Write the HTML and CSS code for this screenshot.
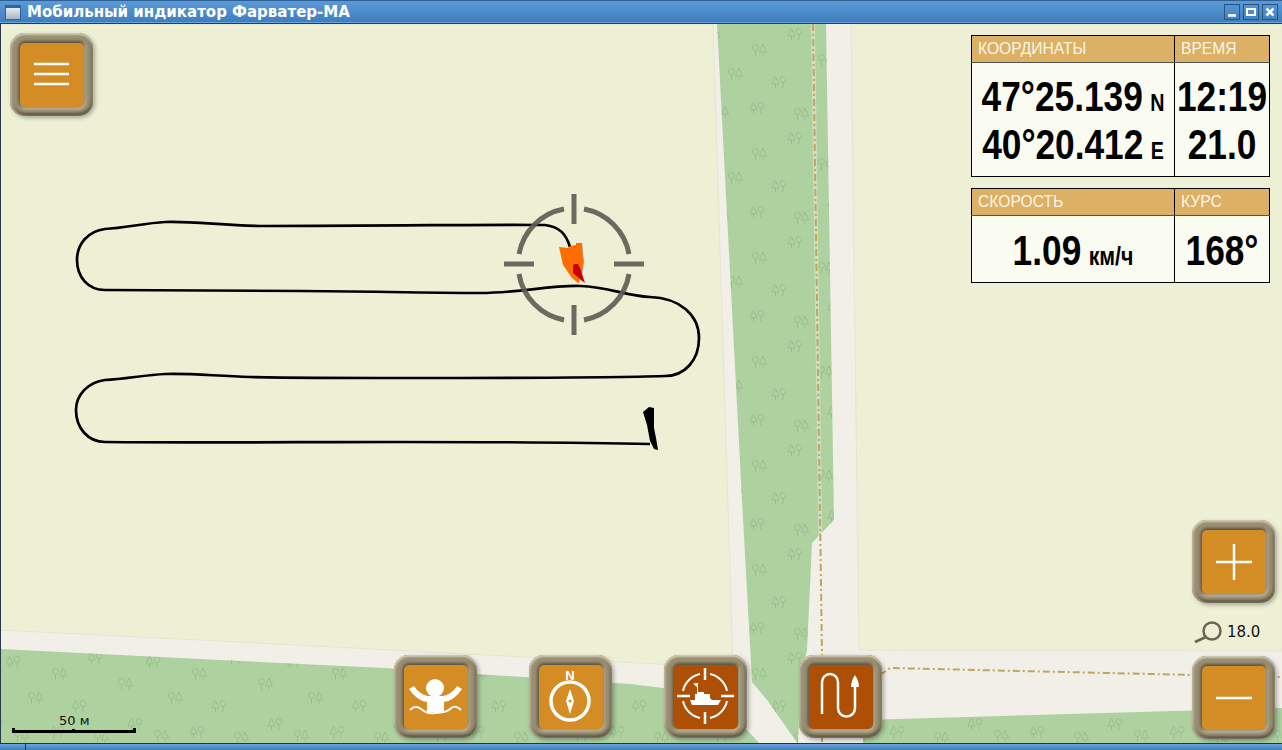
FILE: index.html
```html
<!DOCTYPE html>
<html lang="ru">
<head>
    <meta charset="UTF-8">
    <title>Мобильный индикатор Фарватер-МА</title>
    <link rel="stylesheet" href="styles.css">
</head>
<body>
<div class="window">
    <div class="titlebar">
        <span class="win-icon"></span>
        <span class="win-title">Мобильный индикатор Фарватер-МА</span>
        <span class="win-btns">
            <span class="win-btn"><svg viewBox="0 0 14 14"><path d="M3 10.500h8" stroke="#fff" stroke-width="2.500"/></svg></span>
            <span class="win-btn"><svg viewBox="0 0 14 14"><rect x="3" y="4" width="8" height="6" fill="none" stroke="#fff" stroke-width="2"/></svg></span>
            <span class="win-btn"><svg viewBox="0 0 14 14"><path d="M3.500 3.500l7 7M10.500 3.500l-7 7" stroke="#fff" stroke-width="2.500"/></svg></span>
        </span>
    </div>

    <div class="map">
        <!-- карта: координаты совпадают с координатами окна -->
        <svg class="map-canvas" viewBox="0 24 1282 720">
            <defs>
                <g id="trees-a" fill="none" stroke="#98bd8c" stroke-width="1">
                    <circle cx="3.500" cy="3.500" r="3"/><path d="M3.500 6.500V12"/>
                    <path d="M11 0l3.500 8h-7zM11 8v4"/>
                </g>
                <g id="trees-b" fill="none" stroke="#98bd8c" stroke-width="1">
                    <path d="M3.500 0l3.500 8H0zM3.500 8v4"/>
                    <circle cx="11" cy="3.500" r="3"/><path d="M11 6.500V12"/>
                </g>
                <pattern id="forest" width="140" height="104" patternUnits="userSpaceOnUse" x="6" y="24">
                    <use href="#trees-b" x="0" y="8"/>
                    <use href="#trees-a" x="46" y="20"/>
                    <use href="#trees-b" x="82" y="4"/>
                    <use href="#trees-a" x="112" y="30"/>
                    <use href="#trees-a" x="22" y="44"/>
                    <use href="#trees-b" x="66" y="52"/>
                    <use href="#trees-a" x="8" y="82"/>
                    <use href="#trees-b" x="44" y="78"/>
                    <use href="#trees-a" x="88" y="84"/>
                    <use href="#trees-b" x="122" y="70"/>
                </pattern>
                <g id="wood">
                    <polygon points="717,24 826,24 834,520 812,543 807,650 800,685 798,744 767,700 752,682 742,500"/>
                    <polygon points="0,649 200,659 385,668 630,684 680,690 700,700 745,728 760,744 0,744"/>
                    <polygon points="863,720 1282,708 1282,744 863,744"/>
                </g>
            </defs>

            <rect class="road" x="0" y="24" width="1282" height="720"/>
            <polygon class="land" points="0,24 713,24 733,668 200,640 0,630"/>
            <polygon class="land" points="851,24 1282,24 1282,651 859,650"/>

            <use href="#wood" fill="#aed1a0"/>
            <use href="#wood" fill="url(#forest)"/>

            <path class="trail-halo" d="M813 24L822 655M822 735V744M880 675L890 668L1282 677"/>
            <path class="trail" d="M813 24L822 655M822 735V744M880 675L890 668L1282 677"/>

            <path class="track" d="M570 247C566 234 560 227 545 225C500 224 400 226 260 226C220 225 190 221 165 222C145 223 125 228 105 229C88 231 77 244 77 260C77 277 88 290 105 290C180 291 240 291 300 291C360 291 420 293 480 293C520 293 550 285 580 286C610 287 625 296 650 297C680 298 699 315 699 338C699 360 685 376 665 376C600 378 500 378 400 378C350 378 300 378 250 377C215 376 190 373 165 374C145 375 125 379 105 380C88 382 76 395 76 410C76 428 88 442 105 442C200 443 300 442 400 442C480 442 570 442 650 444"/>
            <polygon class="track-end" points="643,412 649,407 654,408 654,418 654,428 656,438 658,450 654,449 650,441 647,425"/>

            <path class="boat-shade" d="M582 243L584 262L581 283L579 265Z"/>
            <polygon class="boat" points="559,247 569,248 570,246 576,245 576,243 582,243 583,265 579,283 578,283 572,278 563,265"/>
            <polygon class="boat-mark" points="573,265 575,264 578,264 580,268 585,283 581,280 573,273"/>

            <g class="sight">
                <path d="M574 194V224M574 305V335M504 264H534M614 264H644"/>
                <path d="M564 209A56 56 0 0 0 519 254M584 209A56 56 0 0 1 629 254M519 274A56 56 0 0 0 564 320M629 274A56 56 0 0 1 584 320"/>
            </g>

            <path class="scale-bar" d="M12 731.500H136M13.500 728V733M134.500 728V733M73.500 729V733"/>
        </svg>

        <button class="hw-btn menu-btn">
            <svg viewBox="0 0 64 64"><path class="ico-line" d="M14 21H49M14 31H49M14 41H49"/></svg>
        </button>

        <div class="panels">
            <table class="info">
                <tr class="info-head"><th class="col-wide"><span>КООРДИНАТЫ</span></th><th><span>ВРЕМЯ</span></th></tr>
                <tr class="info-body tall">
                    <td>
                        <div class="val">47°25.139<small>N</small></div>
                        <div class="val">40°20.412<small>E</small></div>
                    </td>
                    <td>
                        <div class="val">12:19</div>
                        <div class="val">21.0</div>
                    </td>
                </tr>
            </table>
            <table class="info">
                <tr class="info-head"><th class="col-wide"><span>СКОРОСТЬ</span></th><th><span>КУРС</span></th></tr>
                <tr class="info-body">
                    <td><div class="val">1.09<small class="unit">км/ч</small></div></td>
                    <td><div class="val">168°</div></td>
                </tr>
            </table>
        </div>

        <div class="zoom-col">
            <button class="hw-btn">
                <svg viewBox="0 0 64 64"><path class="ico-line" d="M32 14V50M14 32H50"/></svg>
            </button>
            <div class="zoom-level">
                <svg viewBox="0 0 28 24"><circle cx="18" cy="11" r="8.500" fill="none" stroke="#6d6550" stroke-width="2.500"/><path d="M12 17L1 22" stroke="#6d6550" stroke-width="3"/></svg>
                <span>18.0</span>
            </div>
            <button class="hw-btn">
                <svg viewBox="0 0 64 64"><path class="ico-line" d="M14 32H50"/></svg>
            </button>
        </div>

        <div class="toolbar">
            <button class="hw-btn">
                <svg viewBox="0 0 64 64">
                    <circle cx="31" cy="23" r="9" fill="#fff"/>
                    <path d="M5 24L10 21Q15 29 24 31H39Q48 29 53 21L58 24Q50 36 40 37V47H23V37Q13 36 5 24Z" fill="#fff"/>
                    <path d="M6 45C10 41 13 41 17 44S24 49 31 48S42 48 46 44S53 41 57 45" fill="none" stroke="#fff" stroke-width="2"/>
                </svg>
            </button>
            <button class="hw-btn">
                <svg viewBox="0 0 64 64">
                    <text class="north" x="31" y="15">N</text>
                    <circle cx="31" cy="36" r="19" fill="none" stroke="#fff" stroke-width="3.500"/>
                    <path d="M31 24L35 36L31 49L27 36Z" fill="#fff"/>
                    <circle cx="31" cy="36" r="1.500" fill="#d48c25"/>
                </svg>
            </button>
            <button class="hw-btn dark">
                <svg viewBox="0 0 64 64">
                    <path d="M31 3V15M31 47V59M3 31H16M47 31H60" stroke="#fff" stroke-width="2.500"/>
                    <path d="M26 9A22 22 0 0 0 9 26M36 9A22 22 0 0 1 53 26M9 36A22 22 0 0 0 26 53M53 36A22 22 0 0 1 36 53" fill="none" stroke="#fff" stroke-width="2"/>
                    <path d="M23.500 29V18" stroke="#fff" stroke-width="1"/>
                    <path d="M19 18.500L24 18V23Z" fill="#fff"/>
                    <path d="M16 35H21V29H24V27H30V29H36V33L38 35H47L44 40H18Z" fill="#fff"/>
                </svg>
            </button>
            <button class="hw-btn dark">
                <svg viewBox="0 0 64 64">
                    <path d="M13 49V17A8 8 0 0 1 29 17V43A8.500 8.500 0 0 0 46 43V22" fill="none" stroke="#fff" stroke-width="2.500"/>
                    <path d="M46 10C48 13 50 17 50 22H42C42 17 44 13 46 10Z" fill="#fff"/>
                </svg>
            </button>
        </div>

        <div class="scale-label">50 м</div>
    </div>

    <div class="statusbar">
        <span class="status-cell first"></span>
        <span class="status-cell"></span>
    </div>
</div>
</body>
</html>
```

FILE: styles.css
```css
html, body { margin: 0; height: 100%; overflow: hidden; }
body { font-family: "Liberation Sans", Arial, sans-serif; background: #f2efe9; }
.window { height: 750px; display: flex; flex-direction: column; }

/* заголовок окна */
.titlebar {
    height: 22px;
    flex: none;
    display: flex;
    align-items: center;
    padding: 0 4px 0 5px;
    background: linear-gradient(#5a9ad8, #3f7cbc);
    border-top: 1px solid #2d5f93;
    border-bottom: 1px solid #1f3d5c;
    box-shadow: inset 0 -1px 0 #6aa5de;
}
.win-icon {
    width: 16px;
    height: 15px;
    box-sizing: border-box;
    border: 1px solid #33649a;
    border-top-width: 3px;
    background: linear-gradient(#e8ecf0, #a8b4c4);
}
.win-title {
    margin-left: 6px;
    font: bold 15px "DejaVu Sans", sans-serif;
    color: #fff;
    white-space: nowrap;
}
.win-btns { margin-left: auto; display: flex; gap: 3px; }
.win-btn {
    width: 16px;
    height: 16px;
    box-sizing: border-box;
    border: 1px solid #2a5480;
    display: block;
}
.win-btn svg { display: block; width: 14px; height: 14px; }

/* карта */
.map { position: relative; flex: 1; overflow: hidden; border-left: 1px solid #2b3a4a; }
.map-canvas { position: absolute; left: -1px; top: 0; width: 1282px; height: 720px; display: block; }
.road { fill: #f2efe9; }
.land { fill: #eef0d5; stroke: #e4e6cd; stroke-width: 1; }
.trail-halo { fill: none; stroke: #f2efe9; stroke-width: 4; opacity: .45; }
.trail { fill: none; stroke: #c6a25e; stroke-width: 2; stroke-dasharray: 7 3 2 3; }
.track { fill: none; stroke: #000; stroke-width: 2.700; }
.track-end { fill: #000; }
.boat { fill: #ff6d00; }
.boat-shade { fill: #9a9a90; }
.boat-mark { fill: #c80000; }
.sight { fill: none; stroke: #5c5c54; stroke-width: 5; opacity: .9; }
.scale-bar { fill: none; stroke: #000; stroke-width: 3; }
.scale-label {
    position: absolute;
    left: 58px;
    top: 689px;
    font: 13px "DejaVu Sans", sans-serif;
    color: #111;
}

/* кнопки */
.hw-btn {
    width: 83px;
    height: 83px;
    box-sizing: border-box;
    padding: 9.500px;
    display: block;
    border: none;
    border-radius: 15px;
    background: #998f73;
    box-shadow: inset 0 2px 2px #d2ccb2, inset 2px 0 2px #b5ad92, inset -2px 0 3px #6f6750, inset 0 -3px 3px #5a5240, 2px 2px 4px rgba(0,0,0,.3);
}
.hw-btn svg {
    display: block;
    width: 64px;
    height: 64px;
    border-radius: 5px;
    background: #d48c25;
    box-shadow: 0 -2px 3px #5c5542, -2px 0 3px #6d6550, 2px 0 2px #b9b196, 0 2px 3px #cfcab0;
}
.hw-btn.dark svg { background: #ad5006; }
.ico-line { fill: none; stroke: #fff; stroke-width: 2.500; }
.north { font: bold 13px "Liberation Sans", sans-serif; fill: #fff; text-anchor: middle; }

.menu-btn { position: absolute; left: 9px; top: 9px; }

.toolbar { position: absolute; left: 393px; top: 631px; display: flex; gap: 52px; }

.zoom-col { position: absolute; left: 1191px; top: 496px; width: 83px; }
.zoom-level {
    height: 53px;
    box-sizing: border-box;
    padding-top: 5px;
    display: flex;
    align-items: center;
    margin-left: 2px;
    gap: 5px;
    font: 15px "DejaVu Sans", sans-serif;
    color: #111;
}
.zoom-level svg { width: 28px; height: 24px; flex: none; }

/* панели данных */
.panels { position: absolute; right: 12px; top: 11px; display: flex; flex-direction: column; gap: 11px; }
.info { border-collapse: collapse; table-layout: fixed; width: 299px; background: #fafbf1; }
.info th, .info td { border: 1px solid #000; padding: 0; box-sizing: border-box; overflow: hidden; }
.col-wide { width: 203px; }
.info-head th {
    height: 27px;
    padding-left: 6px;
    background: #dcb065;
    color: #fbf6e6;
    text-align: left;
    font: normal 17px "Liberation Sans", sans-serif;
    border-bottom-color: #555;
}
.info-head span { display: inline-block; transform: scaleX(.92); transform-origin: left center; }
.info-body td {
    height: 67px;
    padding-top: 1px;
    color: #000;
}
.info-body.tall td { height: 114px; padding-top: 0; }
/* шрифт без узкого начертания, поэтому сжимаем */
.val {
    display: flex;
    justify-content: center;
    align-items: baseline;
    white-space: nowrap;
    font: bold 43px/48px "Liberation Sans", sans-serif;
    transform: scaleX(.82);
}
.val small { font-size: 24px; line-height: 1; margin-left: 9px; }
.val small.unit { font-size: 26px; }

.statusbar {
    height: 6px;
    flex: none;
    display: flex;
    border-top: 1px solid #1f3447;
    background: #1f3447;
    gap: 1px;
}
.status-cell { flex: 1; background: linear-gradient(#6aa5de, #3f7cbc); }
.status-cell.first { flex: none; width: 25px; }
```
